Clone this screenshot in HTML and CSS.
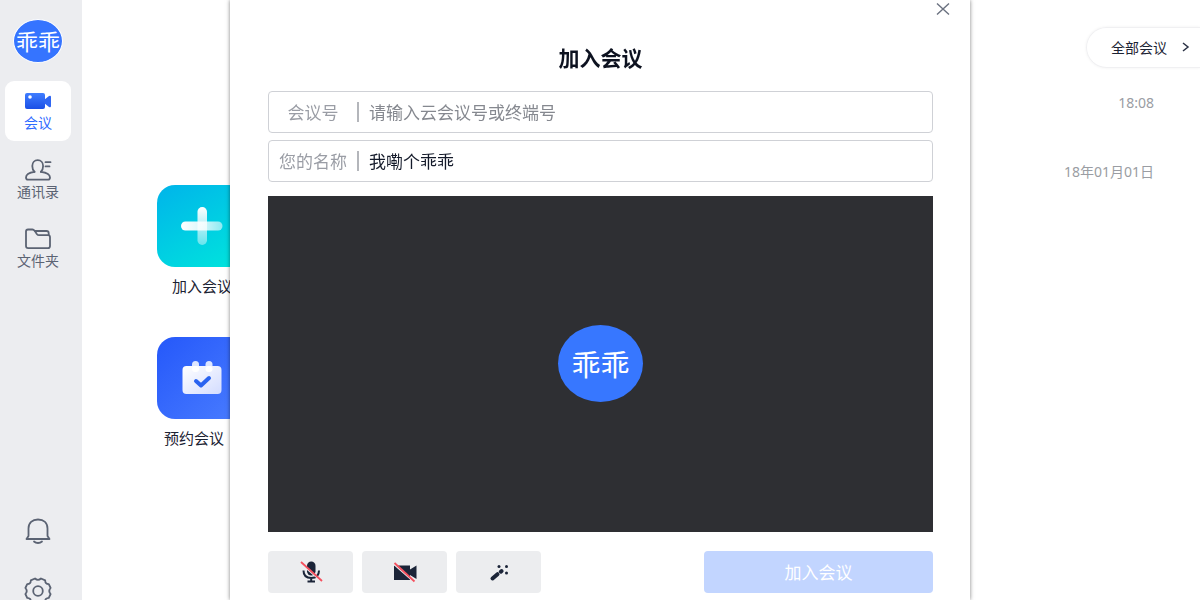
FILE: index.html
```html
<!DOCTYPE html>
<html lang="zh-CN">
<head>
  <meta charset="utf-8">
  <title>加入会议</title>
  <link rel="stylesheet" href="styles.css">
</head>
<body>
  <nav class="sidebar">
    <div class="avatar">乖乖</div>

    <button type="button" class="nav-item active">
      <svg width="28" height="22" viewBox="0 0 28 22">
        <defs>
          <linearGradient id="cam" x1="0" y1="0" x2="0" y2="1">
            <stop offset="0" stop-color="#3f7dff"/>
            <stop offset="1" stop-color="#1a4fe6"/>
          </linearGradient>
        </defs>
        <rect x="1" y="3" width="20" height="16" rx="2" fill="url(#cam)"/>
        <path d="M20 10l5-4q2-1 2 1v9q0 2-2 1l-5-4z" fill="#2f66f2"/>
        <circle cx="6" cy="7" r="1.8" fill="#fff"/>
      </svg>
      <span>会议</span>
    </button>
    <button type="button" class="nav-item">
      <svg width="28" height="22" viewBox="0 0 28 22" fill="none" stroke="#5b6373" stroke-width="1.8" stroke-linecap="round" stroke-linejoin="round">
        <path d="M10.500 12.800C9 11.500 8.300 9.500 8.300 7C8.300 3.500 10.500 1.200 13.700 1.200s5.400 2.300 5.400 5.800c0 2.500-.7 4.500-2.200 5.800"/>
        <path d="M10.500 12.800C5 13.500 2 15.500 2 18.500c0 1.500.7 2.200 2 2.200h20c1.300 0 2-.7 2-2.200 0-3-3-5-9.100-5.700"/>
        <path d="M21.500 3.200h5M21.500 7.400h4"/>
      </svg>
      <span>通讯录</span>
    </button>
    <button type="button" class="nav-item">
      <svg width="28" height="22" viewBox="0 0 28 22" fill="none" stroke="#5b6373" stroke-width="1.8" stroke-linejoin="round">
        <path d="M4 1.500h4.500c1 0 1.500.5 2.100 1.300L13 6.200c.6.800 1 1 2 1h9c1.500 0 2 .6 2 2V18c0 1.600-.6 2.200-2.200 2.200H4.200C2.600 20.200 2 19.600 2 18V3.500c0-1.400.6-2 2-2z"/>
        <path d="M10.500 3h12c1.500 0 2.200.8 2.200 2.200v2"/>
      </svg>
      <span>文件夹</span>
    </button>

    <div class="sidebar-bottom">
      <button type="button" class="icon-btn" aria-label="通知">
        <svg width="28" height="28" viewBox="0 0 28 28" fill="none" stroke="#5b6373" stroke-width="1.8" stroke-linecap="round" stroke-linejoin="round">
          <path d="M4.500 19V11.500C4.500 6 8.200 2.500 14 2.500s9.500 3.500 9.500 9V19l2 3h-23z"/>
          <path d="M10 24.500c2.200 2 5.800 2 8 0"/>
        </svg>
      </button>
      <button type="button" class="icon-btn" aria-label="设置">
        <svg width="28" height="28" viewBox="0 0 28 28" fill="none" stroke="#5b6373" stroke-width="1.8" stroke-linejoin="round">
          <path d="M11 1.500q3 2.700 6 0l4.200 1.800q-.2 3.700 3.600 3.900L26.600 11q-2.700 3 0 6l-1.800 3.900q-3.800.2-3.600 3.800L17 26.500q-3-2.700-6 0l-4.200-1.800q.2-3.600-3.600-3.800L1.400 17q2.700-3 0-6l1.800-3.800q3.800-.2 3.600-3.900z"/>
          <circle cx="14" cy="14" r="4.800"/>
        </svg>
      </button>
    </div>
  </nav>

  <main class="home">
    <div class="shortcuts">
      <button type="button" class="shortcut">
        <span class="tile tile-join">
          <svg width="42" height="38" viewBox="0 0 42 38">
            <defs>
              <linearGradient id="plus" x1="0" y1="0" x2="0" y2="1">
                <stop offset="0" stop-color="#fff"/>
                <stop offset="1" stop-color="#fff" stop-opacity=".4"/>
              </linearGradient>
              <linearGradient id="bar" x1="0" y1="0" x2="1" y2="0">
                <stop offset="0" stop-color="#fff"/>
                <stop offset=".5" stop-color="#fff" stop-opacity=".85"/>
                <stop offset="1" stop-color="#fff" stop-opacity=".55"/>
              </linearGradient>
            </defs>
            <rect x="16.5" y="0" width="9.5" height="38" rx="4.7" fill="url(#plus)"/>
            <rect x="0" y="14.5" width="41.5" height="9" rx="4.5" fill="url(#bar)"/>
          </svg>
        </span>
        <span class="caption">加入会议</span>
      </button>
      <button type="button" class="shortcut">
        <span class="tile tile-book">
          <svg width="40" height="34" viewBox="0 0 40 34">
            <defs>
              <linearGradient id="page" x1="0" y1="0" x2="1" y2="1">
                <stop offset="0" stop-color="#fff"/>
                <stop offset="1" stop-color="#d3dcff"/>
              </linearGradient>
            </defs>
            <rect x="10" y="0" width="7" height="12" rx="3.5" fill="#dde6ff"/>
            <rect x="23.5" y="0" width="7" height="12" rx="3.5" fill="#dde6ff"/>
            <rect x="0.5" y="5" width="39" height="28" rx="4" fill="url(#page)"/>
            <rect x="10" y="5" width="7" height="6" rx="3" fill="#fff"/>
            <rect x="23.5" y="5" width="7" height="6" rx="3" fill="#fff"/>
            <path d="M14 20l5 4.500 8-7.500" fill="none" stroke="#2a63f0" stroke-width="4" stroke-linecap="round" stroke-linejoin="round"/>
          </svg>
        </span>
        <span class="caption">预约会议
          <svg width="16" height="16" viewBox="0 0 16 16" fill="none" stroke="#1c2333" stroke-width="1.5"><path d="M9 6.500l3 3 3-3"/></svg>
        </span>
      </button>
    </div>

    <aside class="history">
      <button type="button" class="all-meetings">
        全部会议
        <svg width="10" height="12" viewBox="0 0 10 12" fill="none" stroke="#2b3245" stroke-width="1.5"><path d="M2 2l5 4-5 4"/></svg>
      </button>
      <time class="time">18:08</time>
      <time class="time">18年01月01日</time>
    </aside>
  </main>

  <div class="overlay">
    <form class="dialog">
      <button type="button" class="close" aria-label="关闭">
        <svg width="14" height="12" viewBox="0 0 14 12" fill="none" stroke="#6b7280" stroke-width="1.4"><path d="M1 .5l12 11M13 .5l-12 11"/></svg>
      </button>
      <h1 class="title">加入会议</h1>

      <div class="field">
        <label for="meeting-id">会议号</label>
        <input id="meeting-id" type="text" placeholder="请输入云会议号或终端号">
      </div>
      <div class="field">
        <label for="user-name">您的名称</label>
        <input id="user-name" type="text" value="我嘞个乖乖">
      </div>

      <div class="preview">
        <div class="preview-avatar">乖乖</div>
      </div>

      <div class="actions">
        <button type="button" class="toggle" aria-label="麦克风">
          <svg width="24" height="24" viewBox="0 0 24 24">
            <rect x="8" y="1.5" width="8.5" height="14" rx="4.2" fill="#1b2438"/>
            <path d="M4.500 10.500c0 5 3 7.500 7.700 7.500s7.800-2.500 7.800-7.500M12.200 18v3.500M8.500 21.500h7.500" fill="none" stroke="#1b2438" stroke-width="2"/>
            <path d="M1.500 3.500l21 18" stroke="#ecedef" stroke-width="1.5"/>
            <path d="M2 2l21 19" stroke="#f5515f" stroke-width="1.8"/>
          </svg>
        </button>
        <button type="button" class="toggle" aria-label="摄像头">
          <svg width="24" height="24" viewBox="0 0 24 24">
            <path d="M1 5.500h16v4l6.500-4v13.500l-6.500-4V20H1z" fill="#1b2438"/>
            <path d="M1 4.500l20 17.500" stroke="#ecedef" stroke-width="1.5"/>
            <path d="M1.500 3l20 18.500" stroke="#f5515f" stroke-width="1.8"/>
          </svg>
        </button>
        <button type="button" class="toggle" aria-label="美颜">
          <svg width="24" height="24" viewBox="0 0 24 24">
            <path d="M5.500 18.500l5-4.300" stroke="#1b2438" stroke-width="4" stroke-linecap="round"/>
            <path d="M13.800 11.700l.8-.7" stroke="#1b2438" stroke-width="4" stroke-linecap="round"/>
            <circle cx="12" cy="6.500" r="1.500" fill="#1b2438"/>
            <circle cx="19.500" cy="6.500" r="1.500" fill="#1b2438"/>
            <circle cx="19.500" cy="13" r="1.500" fill="#1b2438"/>
          </svg>
        </button>
        <button type="submit" class="submit" disabled>加入会议</button>
      </div>
    </form>
  </div>
</body>
</html>
```
FILE: styles.css
```css
* {
  box-sizing: border-box;
}
html, body {
  margin: 0;
  height: 100%;
}
body {
  display: flex;
  overflow: hidden;
  background: #fff;
  color: #1c2333;
  font: 14px/20px "Noto Sans CJK SC", sans-serif;
}
button {
  margin: 0;
  padding: 0;
  border: none;
  background: none;
  color: inherit;
  font: inherit;
  cursor: pointer;
}
svg {
  display: block;
  flex: none;
}

/* Sidebar */
.sidebar {
  display: flex;
  flex-direction: column;
  align-items: center;
  flex: none;
  gap: 9px;
  width: 82px;
  padding: 19px 11px 0 5px;
  background: #ecedf0;
}
.avatar {
  display: flex;
  align-items: center;
  justify-content: center;
  width: 50px;
  height: 44px;
  margin-bottom: 9px;
  padding-bottom: 2px;
  border: 1px solid #fff;
  border-radius: 50%;
  background: #3574ff;
  color: #fff;
  font-size: 22px;
}
.nav-item {
  display: flex;
  flex-direction: column;
  align-items: center;
  width: 100%;
  height: 60px;
  padding-top: 9px;
  border-radius: 9px;
  color: #5b6373;
}
.nav-item.active {
  background: #fff;
  color: #2f6bff;
}
.sidebar-bottom {
  display: flex;
  flex-direction: column;
  gap: 32px;
  margin-top: auto;
  margin-bottom: -5px;
}

/* Home */
.home {
  display: flex;
  flex: 1;
  justify-content: space-between;
}
.shortcuts {
  display: flex;
  flex-direction: column;
  gap: 39px;
  padding: 185px 0 0 75px;
}
.shortcut {
  display: flex;
  flex-direction: column;
  align-items: center;
  gap: 7px;
}
.tile {
  display: flex;
  align-items: center;
  justify-content: center;
  width: 90px;
  height: 82px;
  border-radius: 18px;
}
.tile-join {
  background: linear-gradient(150deg, #00b4ea, #00e6dc);
}
.tile-book {
  background: linear-gradient(135deg, #2558fa, #4a7dff);
}
.caption {
  display: flex;
  align-items: center;
  font-size: 15px;
  line-height: 24px;
}
.history {
  display: flex;
  flex-direction: column;
  align-items: flex-end;
  padding-top: 27px;
}
.all-meetings {
  display: flex;
  align-items: center;
  gap: 14px;
  height: 41px;
  padding: 0 9px 2px 24px;
  border: 1px solid #f0f0f2;
  border-right: none;
  border-radius: 21px 0 0 21px;
  box-shadow: 0 0 3px rgba(0, 0, 0, 0.06);
}
.time {
  margin: 25px 46px 24px 0;
  color: #9a9da3;
  font-family: "Noto Sans", "Noto Sans CJK SC", sans-serif;
}

/* Join dialog */
.overlay {
  position: fixed;
  inset: 0;
  display: flex;
  justify-content: center;
}
.dialog {
  display: flex;
  flex-direction: column;
  width: 740px;
  max-width: 100%;
  padding: 3px 37px 0 38px;
  background: #fff;
  box-shadow: 0 0 4px rgba(0, 0, 0, 0.5);
}
.close {
  align-self: flex-end;
  margin-right: -17px;
}
.title {
  margin: 27px 0 19px;
  color: #0d1220;
  font-size: 21px;
  line-height: 30px;
  font-weight: 700;
  text-align: center;
}
.field {
  display: flex;
  align-items: center;
  height: 42px;
  margin-bottom: 7px;
  border: 1px solid #cfd1d6;
  border-radius: 4px;
  font-size: 17px;
}
.field label {
  width: 90px;
  border-right: 2px solid #b4b6bb;
  color: #9a9da5;
  text-align: center;
}
.field input {
  flex: 1;
  min-width: 0;
  padding: 0 10px;
  border: none;
  outline: none;
  background: none;
  color: #141a2a;
  font: inherit;
}
.field input::placeholder {
  color: #85888f;
}
.preview {
  display: flex;
  align-items: center;
  justify-content: center;
  height: 336px;
  margin-top: 7px;
  padding-bottom: 2px;
  background: #2e2f33;
}
.preview-avatar {
  display: flex;
  align-items: center;
  justify-content: center;
  width: 85px;
  height: 77px;
  border-radius: 50%;
  background: #3777ff;
  color: #fff;
  font-size: 29px;
}
.actions {
  display: flex;
  gap: 9px;
  margin-top: 19px;
}
.toggle {
  display: flex;
  align-items: center;
  justify-content: center;
  width: 85px;
  height: 42px;
  border-radius: 4px;
  background: #ecedef;
}
.submit {
  width: 229px;
  height: 42px;
  margin-left: auto;
  border-radius: 4px;
  background: #c2d5ff;
  color: #fff;
  font-size: 17px;
}
```
